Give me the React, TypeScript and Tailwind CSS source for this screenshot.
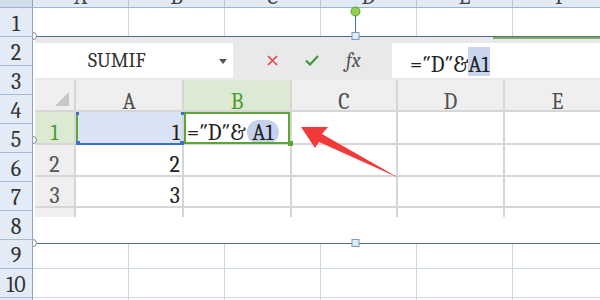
import React from "react";

const outerCols = ["A", "B", "C", "D", "E", "F"];
const outerRows = [1, 2, 3, 4, 5, 6, 7, 8, 9, 10, 11];

export default function App() {
  return (
    <div className="relative w-[600px] h-[300px] overflow-hidden bg-white font-serif [font-family:Liberation_Serif,DejaVu_Serif,serif]">
      {/* outer column header (scrolled, only bottom visible) */}
      <div className="flex h-[8px] border-b border-[#9fb4cf] bg-[#e2eaf5]">
        <div className="w-[33px] shrink-0 border-r border-[#8ca3c3] bg-[#d3deed]" />
        {outerCols.map((c) => (
          <div key={c} className="w-[96px] shrink-0 overflow-hidden border-r border-[#b4c5da] text-center">
            <div className="-mt-[14px] text-[22px] leading-[22px] text-[#444]">{c}</div>
          </div>
        ))}
      </div>
      {/* outer rows */}
      {outerRows.map((r) => (
        <div key={r} className="flex h-[29px]">
          <div className="w-[33px] shrink-0 flex justify-center pt-[5px] border-r border-b border-r-[#8ca3c3] border-b-[#a9bcd4] bg-[#e3ebf6] text-[22px] leading-[22px] text-[#333]">
            {r <= 10 ? r : ""}
          </div>
          {outerCols.map((c) => (
            <div key={c} className="w-[96px] shrink-0 border-r border-b border-[#cdd8e6]" />
          ))}
        </div>
      ))}

      {/* embedded picture */}
      <div className="absolute left-[33px] top-[36px] w-[567px] h-[208px] border-y border-[#4f6b93] bg-white overflow-hidden pl-[2px]">
        <div className="flex justify-end h-[6px] bg-[#e9e9e9]">
          <div className="w-[107px] h-[2px] bg-[#7ab34f]" />
        </div>
        {/* formula toolbar */}
        <div className="flex items-start h-[37px] bg-[#e9e9e9]">
          <div className="w-[198px] h-[35px] shrink-0 bg-white flex items-start">
            <span className="pl-[53px] pt-[8px] text-[20px] leading-[20px] text-[#333]">SUMIF</span>
            <span className="ml-auto mr-[6px] mt-[16px] w-0 h-0 border-x-[4px] border-x-transparent border-t-[5px] border-t-[#555]" />
          </div>
          <div className="w-[159px] h-[35px] shrink-0 flex items-center">
            <svg className="ml-[34px]" width="11" height="11" viewBox="0 0 11 11">
              <path d="M1 1 L10 10 M10 1 L1 10" stroke="#e0474c" strokeWidth="1.6" fill="none" />
            </svg>
            <svg className="ml-[27px]" width="14" height="11" viewBox="0 0 14 11">
              <path d="M1 5.5 L5 9.5 L13 1" stroke="#3b9a3b" strokeWidth="2.2" fill="none" />
            </svg>
            <span className="ml-[27px] italic text-[20px] leading-[20px] text-[#555]">fx</span>
          </div>
          <div className="flex-1 h-[35px] bg-white flex items-start pt-[4px] pl-[18px] text-[22px] text-[#222]">
            <span className="pt-[7px] leading-[22px]">=″D″&amp;</span>
            <span className="pt-[7px] leading-[22px] bg-[#c9d5ee]">A1</span>
          </div>
        </div>

        {/* inner column header */}
        <div className="flex h-[32px] bg-[#efefef] border-b-2 border-[#d6d6d6] text-[22px] leading-[22px] text-[#505050]">
          <div className="w-[41px] shrink-0 border-r-2 border-[#d6d6d6] flex items-end justify-end pr-[5px] pb-[4px]">
            <svg width="14" height="14" viewBox="0 0 14 14">
              <polygon points="14,0 14,14 0,14" fill="#c6c6c6" />
            </svg>
          </div>
          <div className="w-[108px] shrink-0 border-r-2 border-[#d6d6d6] text-center pt-[11px]">A</div>
          <div className="w-[108px] shrink-0 border-r-2 border-[#d6d6d6] bg-[#dcead3] text-[#4a9c2a] text-center pt-[11px]">B</div>
          <div className="w-[106px] shrink-0 border-r-2 border-[#d6d6d6] text-center pt-[11px]">C</div>
          <div className="w-[107px] shrink-0 border-r-2 border-[#d6d6d6] text-center pt-[11px]">D</div>
          <div className="w-[107px] shrink-0 border-r-2 border-[#d6d6d6] text-center pt-[11px]">E</div>
        </div>

        {/* row 1 */}
        <div className="flex h-[33px] text-[22px] leading-[22px] text-[#222]">
          <div className="w-[41px] shrink-0 border-r-2 border-b-2 border-[#d6d6d6] bg-[#dcead3] text-[#4a9c2a] text-center pt-[10px]">1</div>
          <div className="relative w-[108px] shrink-0 border-r-2 border-b-2 border-[#d6d6d6] bg-[#dae3f5] text-right pr-[2px] pt-[10px]">
            1
            <div className="absolute left-0 top-0 bottom-0 w-[2px] bg-[#5aa636]" />
            <div className="absolute left-0 right-[-2px] bottom-[-2px] h-[2px] bg-[#3c6fc6]" />
            <div className="absolute left-0 top-0 w-[3px] h-[3px] bg-[#3c6fc6]" />
            <div className="absolute right-[-2px] top-0 w-[3px] h-[3px] bg-[#3c6fc6]" />
            <div className="absolute left-0 bottom-[-2px] w-[4px] h-[4px] bg-[#3c6fc6]" />
            <div className="absolute right-[-2px] bottom-[-2px] w-[4px] h-[4px] bg-[#3c6fc6]" />
          </div>
          <div className="relative w-[108px] shrink-0 border-r-2 border-b-2 border-[#d6d6d6] flex items-start pl-[3px] pt-[8px]">
            <span className="pt-[2px] leading-[22px]">=″D″&amp;</span>
            <span className="ml-[2px] pt-[2px] px-[5px] leading-[22px] rounded-full bg-[#c4d2ee]">A1</span>
            <div className="absolute left-0 top-0 right-0 bottom-[-1px] border-2 border-[#5aa636]" />
            <div className="absolute right-[-3px] bottom-[-3px] w-[5px] h-[5px] bg-[#5aa636]" />
          </div>
          <div className="w-[106px] shrink-0 border-r-2 border-b-2 border-[#d6d6d6]" />
          <div className="w-[107px] shrink-0 border-r-2 border-b-2 border-[#d6d6d6]" />
          <div className="w-[107px] shrink-0 border-r-2 border-b-2 border-[#d6d6d6]" />
        </div>

        {/* rows 2, 3 */}
        {[
          { n: 2, h: "h-[32px]", pt: "pt-[9px]" },
          { n: 3, h: "h-[31px]", pt: "pt-[8px]" },
        ].map((row) => (
          <div key={row.n} className={`flex ${row.h} text-[22px] leading-[22px] text-[#222]`}>
            <div className={`w-[41px] shrink-0 border-r-2 border-b-2 border-[#d6d6d6] bg-[#efefef] text-[#555] text-center ${row.pt}`}>{row.n}</div>
            <div className={`w-[108px] shrink-0 border-r-2 border-b-2 border-[#d6d6d6] text-right pr-[2px] ${row.pt}`}>{row.n}</div>
            <div className="w-[108px] shrink-0 border-r-2 border-b-2 border-[#d6d6d6]" />
            <div className="w-[106px] shrink-0 border-r-2 border-b-2 border-[#d6d6d6]" />
            <div className="w-[107px] shrink-0 border-r-2 border-b-2 border-[#d6d6d6]" />
            <div className="w-[107px] shrink-0 border-r-2 border-b-2 border-[#d6d6d6]" />
          </div>
        ))}

        {/* partial row 4 */}
        <div className="flex h-[9px]">
          <div className="w-[41px] shrink-0 border-r-2 border-[#d6d6d6] bg-[#efefef]" />
          <div className="w-[108px] shrink-0 border-r-2 border-[#d6d6d6]" />
          <div className="w-[108px] shrink-0 border-r-2 border-[#d6d6d6]" />
          <div className="w-[106px] shrink-0 border-r-2 border-[#d6d6d6]" />
          <div className="w-[107px] shrink-0 border-r-2 border-[#d6d6d6]" />
          <div className="w-[107px] shrink-0 border-r-2 border-[#d6d6d6]" />
        </div>
      </div>

      {/* handles and arrow */}
      <svg className="absolute left-0 top-0 pointer-events-none" width="600" height="300" viewBox="0 0 600 300">
        <line x1="355.5" y1="15" x2="355.5" y2="33" stroke="#4f6b93" strokeWidth="1" />
        <circle cx="355.5" cy="11.5" r="4.5" fill="#8fd04c" stroke="#5f9b30" strokeWidth="1" />
        <rect x="352" y="32.5" width="7" height="7" fill="#dcedf8" stroke="#7d99bb" strokeWidth="1" />
        <rect x="352" y="239.5" width="7" height="7" fill="#dcedf8" stroke="#7d99bb" strokeWidth="1" />
        <path d="M33 32.5 A3.5 3.5 0 0 1 33 39.5" fill="#fff" stroke="#8a8a8a" strokeWidth="1" />
        <path d="M33 136.5 A3.5 3.5 0 0 1 33 143.5" fill="#fff" stroke="#8a8a8a" strokeWidth="1" />
        <path d="M33 239.5 A3.5 3.5 0 0 1 33 246.5" fill="#fff" stroke="#8a8a8a" strokeWidth="1" />
        <polygon points="301,127 328,127 322,134 399,178 319,142 315,148" fill="#f23a3a" />
      </svg>
    </div>
  );
}
